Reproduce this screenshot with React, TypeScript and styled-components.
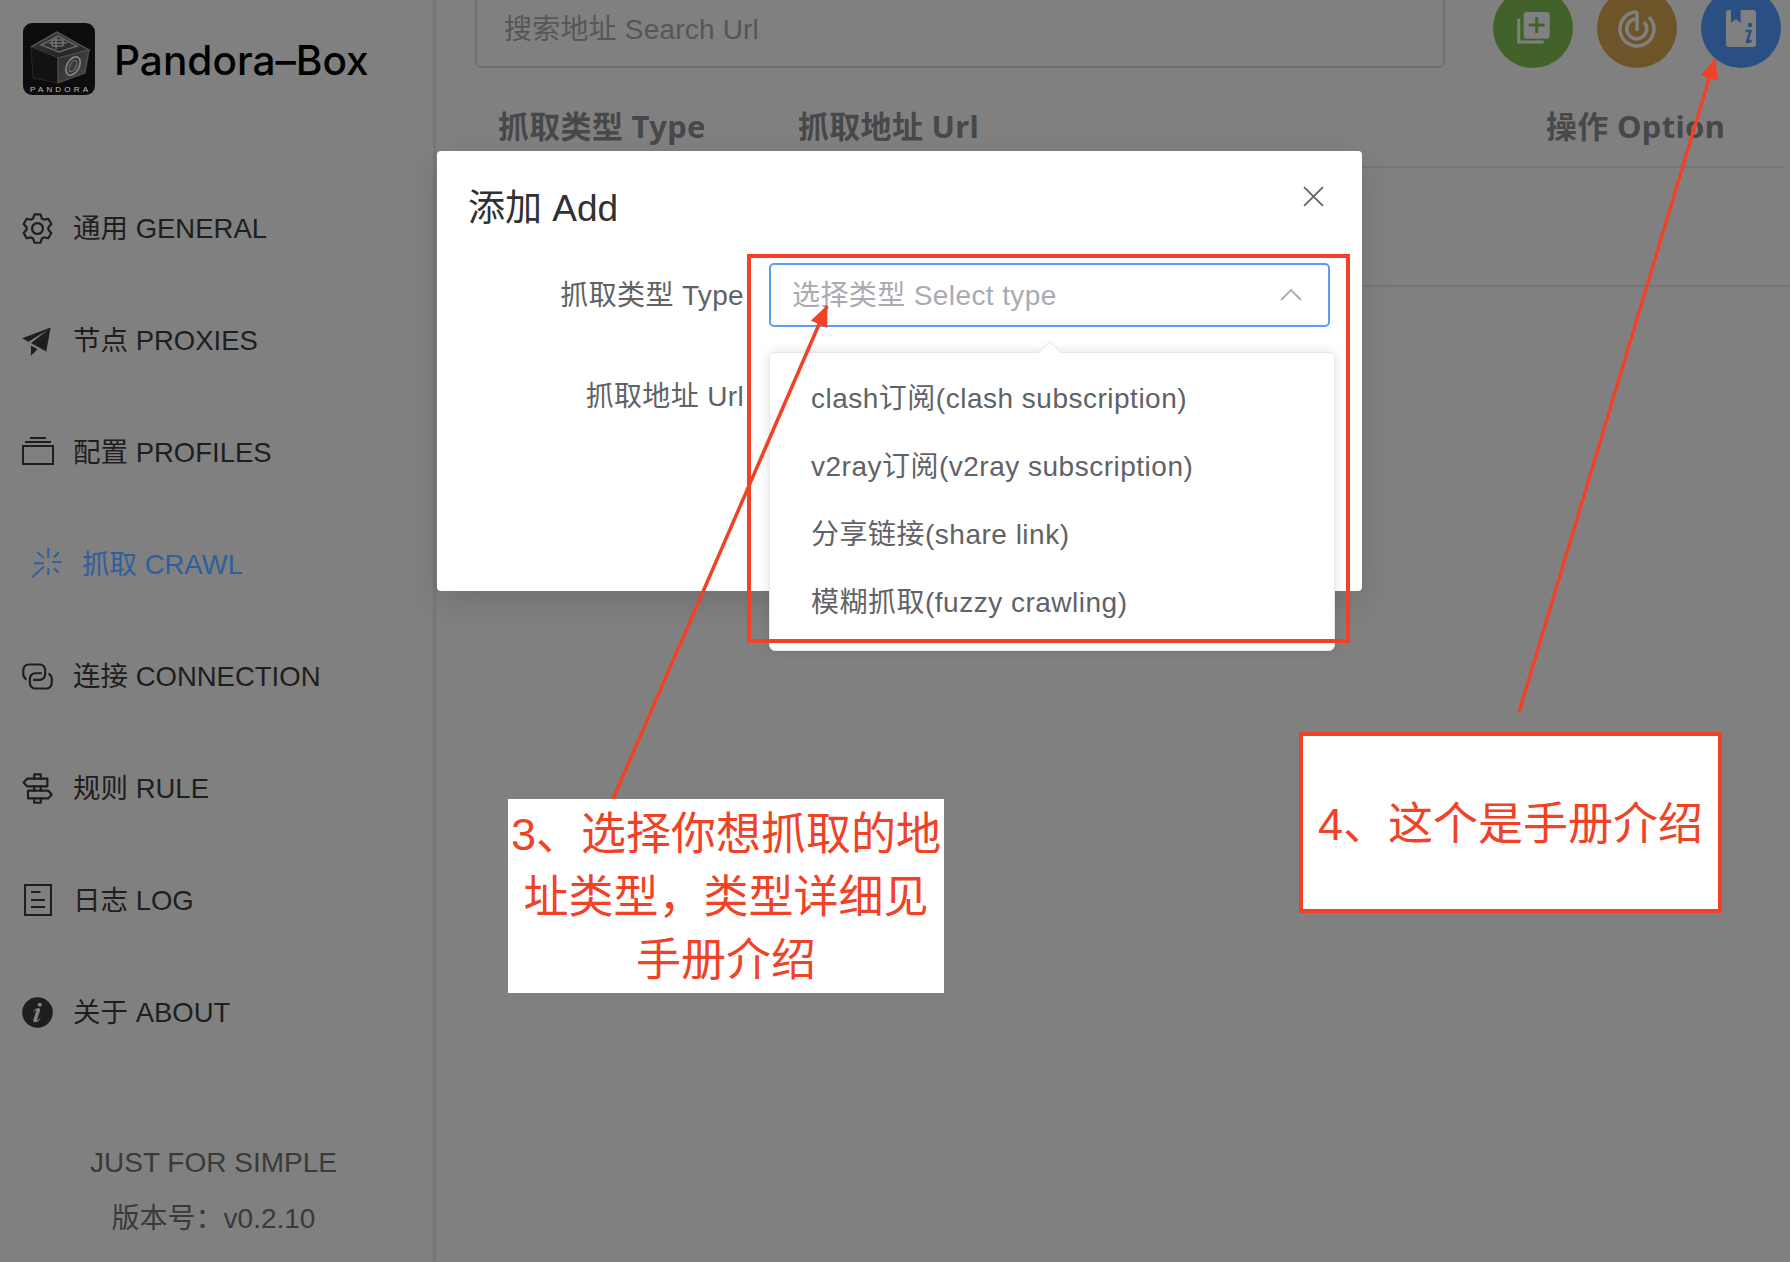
import styled, { createGlobalStyle } from "styled-components";
import type { ReactNode } from "react";

const FONT = `"Liberation Sans", "Noto Sans CJK SC", sans-serif`;

const GlobalStyle = createGlobalStyle`
  html, body {
    margin: 0;
    padding: 0;
    background: #808080;
  }
  * {
    box-sizing: border-box;
  }
`;

const MENU = [
  { key: "general", label: "通用 GENERAL" },
  { key: "proxies", label: "节点 PROXIES" },
  { key: "profiles", label: "配置 PROFILES" },
  { key: "crawl", label: "抓取 CRAWL", active: true },
  { key: "connection", label: "连接 CONNECTION" },
  { key: "rule", label: "规则 RULE" },
  { key: "log", label: "日志 LOG" },
  { key: "about", label: "关于 ABOUT" },
];

const OPTIONS = [
  "clash订阅(clash subscription)",
  "v2ray订阅(v2ray subscription)",
  "分享链接(share link)",
  "模糊抓取(fuzzy crawling)",
];

const Ep = ({ paths }: { paths: string[] }) => (
  <svg viewBox="0 0 1024 1024" width="35" height="35" fill="currentColor">
    {paths.map((d) => (
      <path key={d} d={d} />
    ))}
  </svg>
);

const Line = ({ children }: { children: ReactNode }) => (
  <svg viewBox="0 0 32 32" width="32" height="32" fill="none" stroke="currentColor" strokeWidth="2">
    {children}
  </svg>
);

const MenuIcon = ({ name }: { name: string }) => {
  switch (name) {
    case "general":
      return (
        <Ep
          paths={[
            "M600.704 64a32 32 0 0 1 30.464 22.208l35.2 109.376c14.784 7.232 28.928 15.36 42.432 24.512l112.384-24.192a32 32 0 0 1 34.432 15.36L944.32 364.8a32 32 0 0 1-4.032 37.504l-77.12 85.12a357.12 357.12 0 0 1 0 49.024l77.12 85.248a32 32 0 0 1 4.032 37.504l-88.704 153.6a32 32 0 0 1-34.432 15.296L708.8 803.904c-13.44 9.088-27.648 17.28-42.368 24.512l-35.264 109.376A32 32 0 0 1 600.704 960H423.296a32 32 0 0 1-30.464-22.208L357.696 828.48a351.616 351.616 0 0 1-42.56-24.64l-112.32 24.256a32 32 0 0 1-34.432-15.36L79.68 659.2a32 32 0 0 1 4.032-37.504l77.12-85.248a357.12 357.12 0 0 1 0-48.896l-77.12-85.248A32 32 0 0 1 79.68 364.8l88.704-153.6a32 32 0 0 1 34.432-15.296l112.32 24.256c13.568-9.152 27.776-17.408 42.56-24.64l35.2-109.312A32 32 0 0 1 423.232 64H600.64zm-23.424 64H446.72l-36.352 113.088-24.512 11.968a294.113 294.113 0 0 0-34.816 20.096l-22.656 15.36-116.224-25.088-65.28 113.152 79.68 88.192-1.92 27.136a293.12 293.12 0 0 0 0 40.192l1.92 27.136-79.808 88.192 65.344 113.152 116.224-25.024 22.656 15.296a294.113 294.113 0 0 0 34.816 20.096l24.512 11.968L446.72 896h130.688l36.48-113.152 24.448-11.904a288.282 288.282 0 0 0 34.752-20.096l22.592-15.296 116.288 25.024 65.28-113.152-79.744-88.192 1.92-27.136a293.12 293.12 0 0 0 0-40.256l-1.92-27.136 79.808-88.128-65.344-113.152-116.288 24.96-22.592-15.232a287.616 287.616 0 0 0-34.752-20.096l-24.448-11.904L577.344 128zM512 320a192 192 0 1 1 0 384 192 192 0 0 1 0-384m0 64a128 128 0 1 0 0 256 128 128 0 0 0 0-256",
          ]}
        />
      );
    case "proxies":
      return <Ep paths={["m64 448 832-320-128 704-446.08-243.328L832 192 242.816 545.472zm256 512V657.024L512 768z"]} />;
    case "profiles":
      return (
        <Line>
          <rect x="1" y="10" width="30" height="18" />
          <path d="M8 2h16M3 6h26" />
        </Line>
      );
    case "crawl":
      return (
        <Line>
          <path d="M17.300 0v10M6.300 4.300 13 10M28 4.300 23 9.300M3 15.300h10M21.300 14h9.400M1 29.300 13 18.700M17.300 20v7M23 20l4.300 5" />
        </Line>
      );
    case "connection":
      return (
        <Ep
          paths={[
            "M640 384v64H448a128 128 0 0 0-128 128v128a128 128 0 0 0 128 128h320a128 128 0 0 0 128-128V576a128 128 0 0 0-64-110.848V394.88c74.56 26.368 128 97.472 128 181.056v128a192 192 0 0 1-192 192H448a192 192 0 0 1-192-192V576a192 192 0 0 1 192-192z",
            "M384 640v-64h192a128 128 0 0 0 128-128V320a128 128 0 0 0-128-128H256a128 128 0 0 0-128 128v128a128 128 0 0 0 64 110.848v70.272A192.064 192.064 0 0 1 64 448V320a192 192 0 0 1 192-192h320a192 192 0 0 1 192 192v128a192 192 0 0 1-192 192z",
          ]}
        />
      );
    case "rule":
      return (
        <Ep
          paths={[
            "M640 608h-64V416h64zm0 160v160a32 32 0 0 1-32 32H416a32 32 0 0 1-32-32V768h64v128h128V768zM384 608V416h64v192zm256-352h-64V128H448v128h-64V96a32 32 0 0 1 32-32h192a32 32 0 0 1 32 32z",
            "m220.8 256-71.232 80 71.168 80H768V256zm-14.4-64H800a32 32 0 0 1 32 32v224a32 32 0 0 1-32 32H206.4a32 32 0 0 1-23.936-10.752l-99.584-112a32 32 0 0 1 0-42.496l99.584-112A32 32 0 0 1 206.4 192m678.784 496-71.104 80H266.816V608h547.2zm-56.768-144H234.88a32 32 0 0 0-32 32v224a32 32 0 0 0 32 32h593.6a32 32 0 0 0 23.936-10.752l99.584-112a32 32 0 0 0 0-42.496l-99.584-112A32 32 0 0 0 828.48 544z",
          ]}
        />
      );
    case "log":
      return (
        <Line>
          <rect x="3" y="1" width="26" height="30" />
          <path d="M9 8h9.500M9 16h14M9 23h14" />
        </Line>
      );
    default:
      return (
        <Ep
          paths={[
            "M512 64a448 448 0 1 1 0 896.064A448 448 0 0 1 512 64m67.2 275.072c33.28 0 60.288-23.104 60.288-57.344s-27.072-57.344-60.288-57.344c-33.28 0-60.16 23.104-60.16 57.344s26.88 57.344 60.16 57.344M590.912 699.2c0-6.848 2.368-24.64 1.024-34.752l-52.608 60.544c-10.88 11.456-24.512 19.392-30.912 17.28a12.992 12.992 0 0 1-8.256-14.72l87.68-276.992c7.168-35.136-12.544-67.2-54.336-71.296-44.096 0-108.992 44.736-148.48 101.504 0 6.784-1.28 23.68.064 33.792l52.544-60.608c10.88-11.328 23.552-19.328 29.952-17.152a12.8 12.8 0 0 1 7.808 16.128L388.48 728.576c-10.048 30.72 8.96 60.8 55.104 67.968 67.904 0 108-43.68 147.584-96.448z",
          ]}
        />
      );
  }
};

const Logo = () => (
  <svg viewBox="0 0 72 72" width="72" height="72">
    <defs>
      <linearGradient id="lid" x1="0" y1="0" x2="0" y2="1">
        <stop offset="0" stopColor="#3c3c3c" />
        <stop offset="1" stopColor="#232323" />
      </linearGradient>
      <linearGradient id="side" x1="0" y1="0" x2="1" y2="1">
        <stop offset="0" stopColor="#2e2e2e" />
        <stop offset="1" stopColor="#484848" />
      </linearGradient>
    </defs>
    <rect width="72" height="72" rx="9" fill="#0d0d0d" />
    <path d="M34 9 66 27 35 35 8 24z" fill="url(#lid)" stroke="#5e5e5e" strokeWidth="1.200" />
    <path d="M8 24 35 35 35 60 10 55z" fill="#121212" stroke="#262626" strokeWidth="1" />
    <path d="M35 35 66 27 62 50 35 60z" fill="url(#side)" stroke="#4e4e4e" strokeWidth="1.200" />
    <path d="M35 13 54 23 36 29 18 22z" fill="none" stroke="#666" strokeWidth="1.500" />
    <path d="M29 17h11v6H29zM33 14v12M26 20h18" fill="none" stroke="#8a8a8a" strokeWidth="1" />
    <ellipse cx="50" cy="43" rx="6" ry="10" fill="none" stroke="#8c8c8c" strokeWidth="1.500" transform="rotate(30 50 43)" />
    <ellipse cx="50" cy="43" rx="3" ry="6" fill="none" stroke="#777" strokeWidth="1" transform="rotate(30 50 43)" />
    <text x="7" y="69" textLength="58" fontSize="8" fill="#bdbdbd" fontFamily={FONT}>
      PANDORA
    </text>
  </svg>
);

const App = () => {
  return (
    <Page>
      <GlobalStyle />
      <Sidebar>
        <Brand>
          <Logo />
          <BrandName>Pandora–Box</BrandName>
        </Brand>
        <Menu>
          {MENU.map((item) => (
            <MenuItem key={item.key} $active={item.active}>
              <IconSlot>
                <MenuIcon name={item.key} />
              </IconSlot>
              <MenuLabel>{item.label}</MenuLabel>
            </MenuItem>
          ))}
        </Menu>
        <Footer>
          <div>JUST FOR SIMPLE</div>
          <div>版本号：v0.2.10</div>
        </Footer>
      </Sidebar>

      <Main>
        <TopBar>
          <SearchBox>搜索地址 Search Url</SearchBox>
          <RoundButton $color="#416329">
            <svg viewBox="0 0 40 40" width="40" height="40" fill="none">
              <path d="M5.700 10.700V34H30.700" stroke="#808080" strokeWidth="3" />
              <rect x="10.700" y="4" width="26" height="26.700" rx="3" fill="#808080" />
              <path d="M23.700 9v16M15.700 17h16" stroke="#416329" strokeWidth="3" />
            </svg>
          </RoundButton>
          <RoundButton $color="#6e5429">
            <svg viewBox="0 0 40 40" width="40" height="40" fill="none" stroke="#808080" strokeWidth="3.500">
              <path d="M20 4A17 17 0 1 0 32 9" />
              <path d="M18 11A10 10 0 1 0 27 14" />
              <path d="M20 4v17" />
              <circle cx="20" cy="21" r="2" fill="#808080" stroke="none" />
            </svg>
          </RoundButton>
          <RoundButton $color="#2a5083">
            <svg viewBox="0 0 40 40" width="40" height="40">
              <path
                d="M8 2h2v12.700l4.800-3.400 4.900 3.400V2H32a3 3 0 0 1 3 3v31a3 3 0 0 1-3 3H8a3 3 0 0 1-3-3V5a3 3 0 0 1 3-3z"
                fill="#808080"
              />
              <circle cx="29" cy="17" r="2.300" fill="#2a5083" />
              <path d="M24.500 23h5L26 33.500q0 1.500 4.500-1" fill="none" stroke="#2a5083" strokeWidth="2.600" />
            </svg>
          </RoundButton>
        </TopBar>

        <TableHead>
          <HeadCell>抓取类型 Type</HeadCell>
          <HeadCell>抓取地址 Url</HeadCell>
          <HeadCell>操作 Option</HeadCell>
        </TableHead>
        <EmptyRow />
      </Main>

      <ModalLayer>
        <Modal>
          <ModalHead>
            <ModalTitle>添加 Add</ModalTitle>
            <CloseIcon viewBox="0 0 20 20" fill="none" stroke="#606266" strokeWidth="1.600">
              <path d="M1 1l18 18M19 1 1 19" />
            </CloseIcon>
          </ModalHead>
          <FormRow>
            <FormLabel>抓取类型 Type</FormLabel>
            <SelectField>
              <Placeholder>选择类型 Select type</Placeholder>
              <svg viewBox="0 0 24 14" width="24" height="14" fill="none" stroke="#a8abb2" strokeWidth="1.800">
                <path d="M2 12 12 2l10 10" />
              </svg>
              <Dropdown>
                <DropArrow />
                {OPTIONS.map((opt) => (
                  <DropItem key={opt}>{opt}</DropItem>
                ))}
              </Dropdown>
            </SelectField>
          </FormRow>
          <FormRow>
            <FormLabel>抓取地址 Url</FormLabel>
          </FormRow>
        </Modal>
      </ModalLayer>

      <Highlight />
      <Arrows viewBox="0 0 1790 1262">
        <defs>
          <marker id="head" markerWidth="22" markerHeight="20" refX="20" refY="9" orient="auto" markerUnits="userSpaceOnUse">
            <path d="M0 0 21 9 0 18z" fill="#f04226" />
          </marker>
        </defs>
        <line x1="613" y1="799" x2="827" y2="306" stroke="#f04226" strokeWidth="3.500" markerEnd="url(#head)" />
        <line x1="1519" y1="712" x2="1715" y2="59" stroke="#f04226" strokeWidth="3.500" markerEnd="url(#head)" />
      </Arrows>
      <NoteThree>3、选择你想抓取的地址类型，类型详细见手册介绍</NoteThree>
      <NoteFour>4、这个是手册介绍</NoteFour>
    </Page>
  );
};

const Page = styled.div`
  position: relative;
  display: flex;
  width: 1790px;
  height: 1262px;
  overflow: hidden;
  background: #808080;
  font-family: ${FONT};
`;

const Sidebar = styled.aside`
  width: 436px;
  flex-shrink: 0;
  display: flex;
  flex-direction: column;
  border-right: 3px solid #77777b;
  padding-top: 23px;
`;

const Brand = styled.div`
  display: flex;
  align-items: center;
  gap: 19px;
  padding-left: 23px;
`;

const BrandName = styled.div`
  font-family: Inter, ${FONT};
  font-size: 40.6px;
  font-weight: 500;
  color: #000;
  margin-top: 2px;
`;

const Menu = styled.nav`
  display: flex;
  flex-direction: column;
  margin-top: 77px;
`;

const MenuItem = styled.div<{ $active?: boolean }>`
  height: 112px;
  display: flex;
  align-items: center;
  gap: 18px;
  padding-left: ${(p) => (p.$active ? "29px" : "20px")};
  font-size: 27.5px;
  color: ${(p) => (p.$active ? "#2f5f9e" : "#1e1e1e")};
`;

const IconSlot = styled.div`
  width: 35px;
  height: 35px;
  display: flex;
  align-items: center;
  justify-content: center;
  flex-shrink: 0;
`;

const MenuLabel = styled.span`
  margin-bottom: 5px;
`;

const Footer = styled.div`
  margin-top: 77px;
  display: flex;
  flex-direction: column;
  align-items: center;
  gap: 21px;
  font-size: 28px;
  line-height: 35px;
  color: #3a3a3a;
  width: 427px;
`;

const Main = styled.main`
  flex: 1;
  padding: 0 6px 0 39px;
`;

const TopBar = styled.div`
  display: flex;
  align-items: flex-end;
  height: 68px;
  gap: 24px;
`;

const SearchBox = styled.div`
  width: 970px;
  height: 90px;
  margin-right: 24px;
  flex-shrink: 0;
  display: flex;
  align-items: flex-end;
  padding: 0 28px 19px 27px;
  border: 2px solid #6e6e70;
  border-radius: 6px;
  font-size: 28px;
  letter-spacing: 0.2px;
  color: #565658;
`;

const RoundButton = styled.div<{ $color: string }>`
  width: 80px;
  height: 80px;
  flex-shrink: 0;
  border-radius: 50%;
  background: ${(p) => p.$color};
  display: flex;
  align-items: center;
  justify-content: center;
`;

const TableHead = styled.div`
  display: grid;
  grid-template-columns: 300px 748px 1fr;
  margin-top: 20px;
  height: 80px;
  padding: 0 0 5px 23px;
  align-items: center;
  border-bottom: 2px solid #757578;
`;

const HeadCell = styled.div`
  font-family: "Noto Sans", "Noto Sans CJK SC", sans-serif;
  font-size: 31px;
  font-weight: 700;
  letter-spacing: 0.3px;
  color: #48484a;
  white-space: nowrap;
`;

const EmptyRow = styled.div`
  height: 119px;
  margin-right: -6px;
  border-bottom: 2px solid #757578;
`;

const ModalLayer = styled.div`
  position: absolute;
  inset: 0;
  padding: 151px 0 0 437px;
`;

const Modal = styled.div`
  width: 925px;
  height: 440px;
  background: #fff;
  border-radius: 4px;
  box-shadow: 0 12px 32px rgba(0, 0, 0, 0.12);
  padding: 0 32px;
`;

const ModalHead = styled.div`
  display: flex;
  justify-content: space-between;
  height: 112px;
  padding-top: 35px;
`;

const ModalTitle = styled.div`
  font-size: 37px;
  line-height: 46px;
  margin-left: -1px;
  color: #303133;
`;

const CloseIcon = styled.svg`
  width: 21px;
  height: 21px;
  margin: 0 6px 0 0;
`;

const FormRow = styled.div`
  display: flex;
  align-items: flex-start;
  height: 101px;
`;

const FormLabel = styled.div`
  width: 275px;
  line-height: 66px;
  font-size: 28px;
  letter-spacing: 0.35px;
  text-align: right;
  color: #606266;
  white-space: nowrap;
`;

const SelectField = styled.div`
  position: relative;
  margin-left: 25px;
  width: 561px;
  height: 64px;
  display: flex;
  align-items: center;
  justify-content: space-between;
  padding: 0 25px 0 21px;
  border: 2px solid #5a9df4;
  border-radius: 5px;
`;

const Placeholder = styled.div`
  font-size: 28px;
  letter-spacing: 0.4px;
  color: #a8abb2;
  margin-bottom: 4px;
`;

const Dropdown = styled.div`
  position: absolute;
  left: -2px;
  top: 87px;
  width: 566px;
  height: 299px;
  padding: 12px 0;
  background: #fff;
  border-radius: 6px;
  border: 1px solid #e4e7ed;
  box-shadow: 0 0 12px rgba(0, 0, 0, 0.12);
`;

const DropArrow = styled.div`
  position: absolute;
  top: -9px;
  left: 272px;
  width: 16px;
  height: 16px;
  background: #fff;
  border-left: 1px solid #e4e7ed;
  border-top: 1px solid #e4e7ed;
  transform: rotate(45deg);
`;

const DropItem = styled.div`
  height: 68px;
  line-height: 68px;
  padding-left: 41px;
  font-size: 28px;
  letter-spacing: 0.5px;
  color: #606266;
  white-space: nowrap;
`;

const Highlight = styled.div`
  position: absolute;
  left: 747px;
  top: 254px;
  width: 603px;
  height: 389px;
  border: 4px solid #f04226;
`;

const Arrows = styled.svg`
  position: absolute;
  inset: 0;
  width: 1790px;
  height: 1262px;
  pointer-events: none;
`;

const NoteThree = styled.div`
  position: absolute;
  left: 508px;
  top: 799px;
  width: 436px;
  height: 194px;
  padding-top: 4px;
  background: #fff;
  color: #f04226;
  font-size: 45px;
  line-height: 63px;
  text-align: center;
`;

const NoteFour = styled.div`
  position: absolute;
  left: 1299px;
  top: 732px;
  width: 423px;
  height: 181px;
  padding-bottom: 5px;
  display: flex;
  align-items: center;
  justify-content: center;
  background: #fff;
  border: 4px solid #f04226;
  color: #f04226;
  font-size: 45px;
  white-space: nowrap;
`;

export default App;
